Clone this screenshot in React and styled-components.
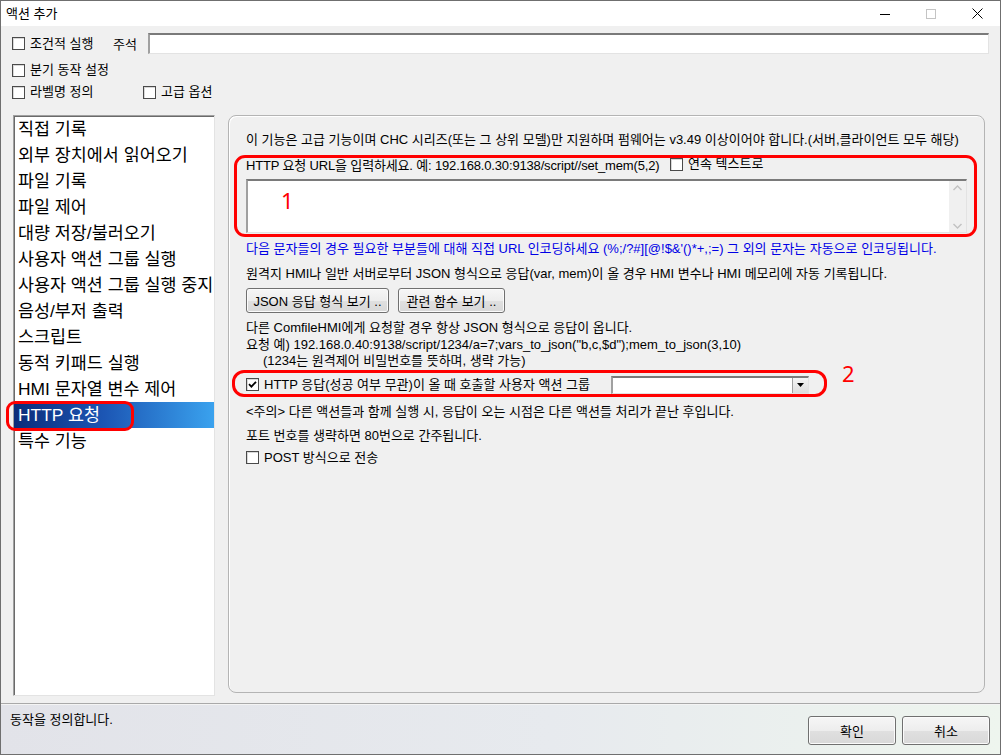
import React from "react";
import styled, { createGlobalStyle, css } from "styled-components";

const FONT = `"Liberation Sans", "Noto Sans CJK KR", sans-serif`;

const GlobalStyle = createGlobalStyle`
  html, body { margin: 0; padding: 0; background: #ffffff; }
  body { font-family: ${FONT}; color: #000; }
  * { box-sizing: border-box; }
`;

const Window = styled.div`
  width: 1001px;
  height: 755px;
  border: 1px solid #6f6f6f;
  background: #f0f0f0;
  display: flex;
  flex-direction: column;
  font-family: ${FONT};
  font-size: 13px;
  overflow: hidden;
`;

const TitleBar = styled.div`
  height: 25px;
  flex: none;
  background: #ffffff;
  display: flex;
  align-items: center;
  padding-left: 5px;
`;

const TitleText = styled.span`
  font-size: 13px;
  line-height: 16px;
  margin-top: 1px;
`;

const Controls = styled.div`
  margin-left: auto;
  display: flex;
  height: 100%;
`;

const ControlBtn = styled.div`
  width: 46px;
  height: 100%;
  display: flex;
  align-items: center;
  justify-content: center;
`;

const TopOptions = styled.div`
  padding: 7px 11px 0 11px;
  display: flex;
  flex-direction: column;
  flex: none;
`;

const OptionRow = styled.div`
  display: flex;
  align-items: center;
  height: ${(p) => p.$h || 20}px;
  margin-top: ${(p) => p.$mt || 0}px;
`;

const CheckLabel = styled.label`
  display: inline-flex;
  align-items: center;
  gap: 5px;
  width: ${(p) => (p.$w ? `${p.$w}px` : "auto")};
  flex: none;
  font-size: 13px;
  line-height: 16px;
  white-space: nowrap;
`;

const Box = styled.span`
  width: 13px;
  height: 13px;
  flex: none;
  background: #ffffff;
  border: 1px solid #4a4a4a;
  box-shadow: inset 1px 1px 0 #d8d8d8;
  display: inline-flex;
  align-items: center;
  justify-content: center;
`;

const MemoLabel = styled.span`
  font-size: 13px;
  margin-right: 11px;
`;

const SunkenField = styled.div`
  background: #ffffff;
  border-top: 2px solid #7a7a7a;
  border-left: 2px solid #a0a0a0;
  border-right: 1px solid #e3e3e3;
  border-bottom: 1px solid #e3e3e3;
`;

const MemoInput = styled(SunkenField)`
  flex: 1;
  height: 21px;
`;

const Main = styled.div`
  display: flex;
  gap: 13px;
  padding: 0 15px 0 12px;
  margin-top: 13px;
  height: 581px;
  flex: none;
`;

const ActionList = styled.div`
  position: relative;
  width: 204px;
  height: 581px;
  background: #ffffff;
  border-top: 1px solid #a0a0a0;
  border-left: 1px solid #a0a0a0;
  border-right: 1px solid #e3e3e3;
  border-bottom: 1px solid #e3e3e3;
  box-shadow: inset 1px 1px 0 #6a6a6a;
`;

const ActionItem = styled.div`
  height: 26px;
  line-height: 26px;
  padding-left: 4px;
  font-size: 17.4px;
  white-space: nowrap;
  ${(p) =>
    p.$selected &&
    css`
      color: #ffffff;
      background: linear-gradient(90deg, #0b2c7a 0%, #1c56b4 45%, #3aa2ee 100%);
    `}
`;

const RedRing = styled.div`
  position: absolute;
  border: 3px solid #ff0000;
  border-radius: ${(p) => p.$r || 10}px;
  pointer-events: none;
`;

const RedNumber = styled.div`
  position: absolute;
  color: #ff0000;
  font-family: "Noto Sans", "Liberation Sans", sans-serif;
  font-size: 22px;
  line-height: 22px;
`;

const Panel = styled.div`
  position: relative;
  flex: 1;
  height: 578px;
  border: 1px solid #b4b4b4;
  border-radius: 8px;
  box-shadow: inset 1px 1px 0 #ffffff;
  padding: 16px 17px 0 17px;
  display: flex;
  flex-direction: column;
  align-items: flex-start;
`;

const Line = styled.div`
  font-size: 13px;
  line-height: ${(p) => p.$lh || 16}px;
  margin-top: ${(p) => p.$mt || 0}px;
  padding-left: ${(p) => p.$indent || 0}px;
  color: ${(p) => p.$color || "#000000"};
  white-space: nowrap;
`;

const UrlRow = styled.div`
  display: flex;
  align-items: center;
  height: 16px;
  margin-top: 8px;
  font-size: 13px;
  white-space: nowrap;
`;

const UrlLabel = styled.span`
  width: 410px;
  flex: none;
  letter-spacing: -0.16px;
`;

const UrlCheck = styled(CheckLabel)`
  margin-left: 14px;
`;

const UrlField = styled(SunkenField)`
  margin-top: 7px;
  width: 721px;
  height: 54px;
  display: flex;
`;

const UrlText = styled.div`
  flex: 1;
`;

const ScrollTrack = styled.div`
  width: 17px;
  background: #f0f0f0;
  display: flex;
  flex-direction: column;
  justify-content: space-between;
  align-items: center;
  padding: 4px 0 3px;
`;

const ButtonRow = styled.div`
  display: flex;
  gap: 9px;
  margin-top: 6px;
`;

const WinButton = styled.div`
  width: ${(p) => p.$w}px;
  height: ${(p) => p.$h || 25}px;
  border: 1px solid #707070;
  border-radius: 3px;
  background: linear-gradient(#f6f6f6 0%, #ededed 50%, #e0e0e0 51%, #d8d8d8 100%);
  box-shadow: inset 0 0 0 1px #fbfbfb;
  display: flex;
  align-items: center;
  justify-content: center;
  font-size: 13px;
  white-space: nowrap;
`;

const CallbackRow = styled.div`
  display: flex;
  align-items: center;
  height: 18px;
  margin-top: 6px;
`;

const Combo = styled(SunkenField)`
  margin-left: 14px;
  width: 198px;
  height: 18px;
  display: flex;
  justify-content: flex-end;
`;

const DropBtn = styled.div`
  width: 16px;
  height: 100%;
  border-left: 1px solid #a0a0a0;
  background: linear-gradient(#f4f4f4, #dedede);
  display: flex;
  align-items: center;
  justify-content: center;
`;

const StatusBar = styled.div`
  flex: none;
  height: 51px;
  margin-top: 7px;
  border-top: 1px solid #a9a9a9;
  background: linear-gradient(90deg, #e2e3e9 0%, #e7eaee 55%, #eef5ee 100%);
  box-shadow: inset 0 1px 0 #f4f4f4;
  display: flex;
  align-items: flex-start;
  padding: 0 10px 0 9px;
`;

const StatusText = styled.div`
  font-size: 13px;
  line-height: 16px;
  margin-top: 8px;
`;

const DialogButtons = styled.div`
  margin-left: auto;
  margin-top: 12px;
  display: flex;
  gap: 6px;
`;

const Check = ({ checked }) => (
  <Box>
    {checked && (
      <svg width="9" height="9" viewBox="0 0 9 9">
        <path d="M1 4.2 L3.4 6.6 L8 1.8" fill="none" stroke="#000" strokeWidth="1.8" />
      </svg>
    )}
  </Box>
);

const actions = [
  "직접 기록",
  "외부 장치에서 읽어오기",
  "파일 기록",
  "파일 제어",
  "대량 저장/불러오기",
  "사용자 액션 그룹 실행",
  "사용자 액션 그룹 실행 중지",
  "음성/부저 출력",
  "스크립트",
  "동적 키패드 실행",
  "HMI 문자열 변수 제어",
  "HTTP 요청",
  "특수 기능",
];

export default function App() {
  return (
    <>
      <GlobalStyle />
      <Window>
        <TitleBar>
          <TitleText>액션 추가</TitleText>
          <Controls>
            <ControlBtn>
              <svg width="10" height="10" viewBox="0 0 10 10">
                <path d="M0 5.5 H10" stroke="#000" strokeWidth="1" />
              </svg>
            </ControlBtn>
            <ControlBtn>
              <svg width="10" height="10" viewBox="0 0 10 10">
                <rect x="0.5" y="0.5" width="9" height="9" fill="none" stroke="#c4c4c4" strokeWidth="1" />
              </svg>
            </ControlBtn>
            <ControlBtn>
              <svg width="11" height="11" viewBox="0 0 11 11">
                <path d="M0.5 0.5 L10.5 10.5 M10.5 0.5 L0.5 10.5" stroke="#000" strokeWidth="1" />
              </svg>
            </ControlBtn>
          </Controls>
        </TitleBar>

        <TopOptions>
          <OptionRow $h={21}>
            <CheckLabel $w={101}>
              <Check />
              조건적 실행
            </CheckLabel>
            <MemoLabel>주석</MemoLabel>
            <MemoInput />
          </OptionRow>
          <OptionRow $mt={6}>
            <CheckLabel>
              <Check />
              분기 동작 설정
            </CheckLabel>
          </OptionRow>
          <OptionRow $mt={2}>
            <CheckLabel $w={131}>
              <Check />
              라벨명 정의
            </CheckLabel>
            <CheckLabel>
              <Check />
              고급 옵션
            </CheckLabel>
          </OptionRow>
        </TopOptions>

        <Main>
          <ActionList>
            {actions.map((a) => (
              <ActionItem key={a} $selected={a === "HTTP 요청"}>
                {a}
              </ActionItem>
            ))}
            <RedRing $r={9} style={{ left: -8, top: 285, width: 128, height: 30 }} />
          </ActionList>

          <Panel>
            <Line>
              이 기능은 고급 기능이며 CHC 시리즈(또는 그 상위 모델)만 지원하며 펌웨어는 v3.49 이상이어야 합니다.(서버,클라이언트 모두 해당)
            </Line>
            <UrlRow>
              <UrlLabel>HTTP 요청 URL을 입력하세요. 예: 192.168.0.30:9138/script//set_mem(5,2)</UrlLabel>
              <UrlCheck>
                <Check />
                연속 텍스트로
              </UrlCheck>
            </UrlRow>
            <UrlField>
              <UrlText />
              <ScrollTrack>
                <svg width="9" height="6" viewBox="0 0 9 6">
                  <path d="M0.5 5 L4.5 1 L8.5 5" fill="none" stroke="#c2c2c2" strokeWidth="1.4" />
                </svg>
                <svg width="9" height="6" viewBox="0 0 9 6">
                  <path d="M0.5 1 L4.5 5 L8.5 1" fill="none" stroke="#c2c2c2" strokeWidth="1.4" />
                </svg>
              </ScrollTrack>
            </UrlField>
            <Line $mt={8} $color="#0000e6">
              다음 문자들의 경우 필요한 부분들에 대해 직접 URL 인코딩하세요 (%;/?#][@!$&'()*+,;=) 그 외의 문자는 자동으로 인코딩됩니다.
            </Line>
            <Line $mt={9}>
              원격지 HMI나 일반 서버로부터 JSON 형식으로 응답(var, mem)이 올 경우 HMI 변수나 HMI 메모리에 자동 기록됩니다.
            </Line>
            <ButtonRow>
              <WinButton $w={143}>JSON 응답 형식 보기 ..</WinButton>
              <WinButton $w={107}>관련 함수 보기 ..</WinButton>
            </ButtonRow>
            <Line $mt={7} $lh={16.5}>
              다른 ComfileHMI에게 요청할 경우 항상 JSON 형식으로 응답이 옵니다.
            </Line>
            <Line $lh={16.5}>
              요청 예) 192.168.0.40:9138/script/1234/a=7;vars_to_json("b,c,$d");mem_to_json(3,10)
            </Line>
            <Line $lh={16.5} $indent={17}>
              (1234는 원격제어 비밀번호를 뜻하며, 생략 가능)
            </Line>
            <CallbackRow>
              <CheckLabel $w={351}>
                <Check checked />
                HTTP 응답(성공 여부 무관)이 올 때 호출할 사용자 액션 그룹
              </CheckLabel>
              <Combo>
                <DropBtn>
                  <svg width="7" height="4" viewBox="0 0 7 4">
                    <path d="M0 0 H7 L3.5 4 Z" fill="#000" />
                  </svg>
                </DropBtn>
              </Combo>
            </CallbackRow>
            <Line $mt={10}>
              &lt;주의&gt; 다른 액션들과 함께 실행 시, 응답이 오는 시점은 다른 액션들 처리가 끝난 후입니다.
            </Line>
            <Line $mt={8}>포트 번호를 생략하면 80번으로 간주됩니다.</Line>
            <OptionRow $h={16} $mt={6}>
              <CheckLabel>
                <Check />
                POST 방식으로 전송
              </CheckLabel>
            </OptionRow>

            <RedRing $r={11} style={{ left: 5, top: 39, width: 743, height: 82 }} />
            <RedNumber style={{ left: 52, top: 73 }}>1</RedNumber>
            <RedRing $r={12} style={{ left: 3, top: 254, width: 595, height: 27 }} />
            <RedNumber style={{ left: 613, top: 246 }}>2</RedNumber>
          </Panel>
        </Main>

        <StatusBar>
          <StatusText>동작을 정의합니다.</StatusText>
          <DialogButtons>
            <WinButton $w={88} $h={29}>확인</WinButton>
            <WinButton $w={88} $h={29}>취소</WinButton>
          </DialogButtons>
        </StatusBar>
      </Window>
    </>
  );
}
